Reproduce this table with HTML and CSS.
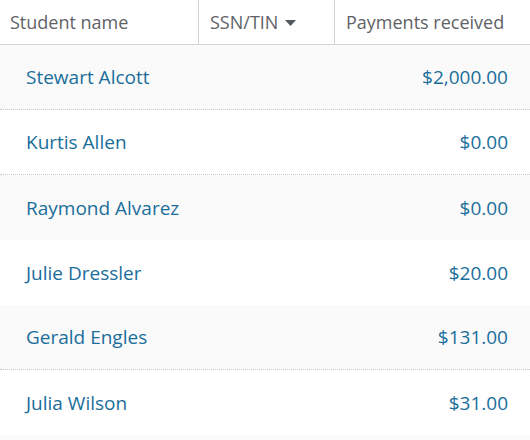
FILE: index.html
```html
<!DOCTYPE html>
<html>
<head>
<meta charset="utf-8">
<link rel="stylesheet" href="styles.css">
</head>
<body>
<div class="table">
  <div class="head">
    <div class="th">Student name</div>
    <div class="th">SSN/TIN <svg class="caret" width="11" height="6" viewBox="0 0 11 6"><path d="M0 0 H11 L5.5 6 Z" fill="#555a60"/></svg></div>
    <div class="th">Payments received</div>
  </div>
  <div class="row alt dotted"><span class="name">Stewart Alcott</span><span class="amt">$2,000.00</span></div>
  <div class="row dotted"><span class="name">Kurtis Allen</span><span class="amt">$0.00</span></div>
  <div class="row alt"><span class="name">Raymond Alvarez</span><span class="amt">$0.00</span></div>
  <div class="row"><span class="name">Julie Dressler</span><span class="amt">$20.00</span></div>
  <div class="row alt dotted"><span class="name">Gerald Engles</span><span class="amt">$131.00</span></div>
  <div class="row"><span class="name">Julia Wilson</span><span class="amt">$31.00</span></div>
  <div class="row alt filler"></div>
</div>
</body>
</html>
```
FILE: styles.css
```css
html, body {
  margin: 0;
  padding: 0;
  background: #ffffff;
}
body {
  font-family: "Open Sans", "Noto Sans", sans-serif;
  font-size: 18px;
}
.table {
  width: 530px;
}
.head {
  display: grid;
  grid-template-columns: 199px 136px 1fr;
  height: 45px;
  box-sizing: border-box;
  border-bottom: 1px solid #d3d3d3;
}
.th {
  display: flex;
  align-items: center;
  padding-left: 11px;
  color: #5f6266;
  border-right: 1px solid #d3d3d3;
  gap: 7px;
  font-size: 18px;
}
.th:first-child {
  padding-left: 10px;
}
.th:last-child {
  border-right: none;
}
.caret {
  margin-top: 1px;
}
.row {
  height: 65px;
  box-sizing: border-box;
  display: flex;
  align-items: center;
  justify-content: space-between;
  padding: 0 22px 0 26px;
  color: #1a6e9a;
  background: #ffffff;
  font-size: 19px;
}
.row.alt {
  background: #fafafa;
}
.row.filler {
  height: 5px;
}
.row.dotted {
  border-bottom: 1px dotted #c8c8c8;
}
```
